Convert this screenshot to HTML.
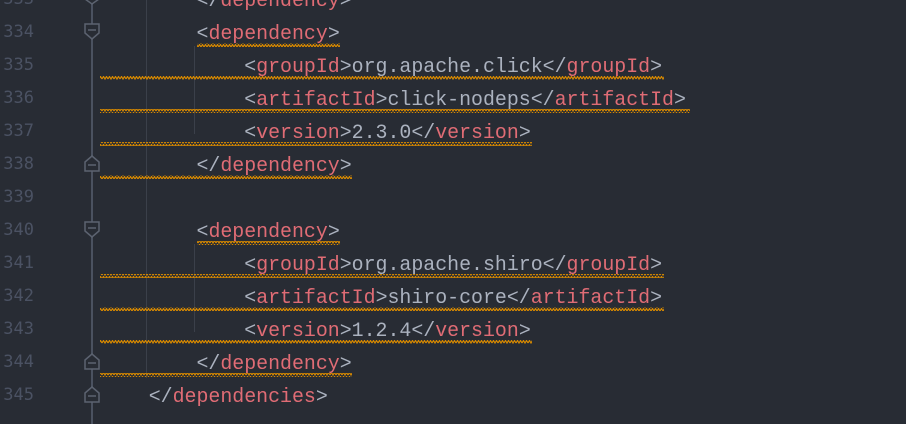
<!DOCTYPE html>
<html><head><style>
html,body{margin:0;padding:0;width:906px;height:424px;overflow:hidden;}
body{background:#282c34;position:relative;font-family:"DejaVu Sans Mono","Liberation Mono",monospace;}
.ln{position:absolute;left:0;width:34px;text-align:right;color:#4b5263;font-size:17px;line-height:33px;height:33px;font-family:"DejaVu Sans Mono","Liberation Mono",monospace;}
.c{position:absolute;left:101px;white-space:pre;font-size:19.9px;line-height:33px;height:33px;color:#abb2bf;font-family:"Liberation Mono",monospace;}
.t{color:#e06c75}
.vl{position:absolute;width:1px;background:#3b404a}
</style></head><body>
<div class="vl" style="left:91px;top:0;height:424px;background:#4b5260;width:2px"></div>
<div class="vl" style="left:146px;top:0;height:378px"></div>
<div class="vl" style="left:194px;top:46px;height:88px"></div>
<div class="vl" style="left:194px;top:244px;height:88px"></div>
<svg width="906" height="424" style="position:absolute;left:0;top:0">
<defs><pattern id="w" width="6" height="4" patternUnits="userSpaceOnUse"><path d="M0 3 L1.5 0.5 L3 3 L4.5 0.5 L6 3" stroke="#d98a00" stroke-width="1.2" fill="none"/></pattern></defs>
<g fill="url(#w)">
<rect x="197" y="43" width="143" height="4"/>
<rect x="100" y="76" width="564" height="4"/>
<rect x="100" y="109" width="590" height="4"/>
<rect x="100" y="142" width="432" height="4"/>
<rect x="100" y="175" width="252" height="4"/>
<rect x="197" y="241" width="143" height="4"/>
<rect x="100" y="274" width="564" height="4"/>
<rect x="100" y="307" width="564" height="4"/>
<rect x="100" y="340" width="432" height="4"/>
<rect x="100" y="373" width="252" height="4"/>
</g>
<g fill="#282c34" stroke="#5c6370" stroke-width="1.5">
<path d="M85 -8 V-1 L92 4 L99 -1 V-8 Z"/>
<path d="M85 24 H99 V33 L92 39 L85 33 Z"/><line x1="88" y1="30" x2="96" y2="30"/>
<path d="M85 171 V162 L92 156 L99 162 V171 Z"/><line x1="88" y1="165" x2="96" y2="165"/>
<path d="M85 222 H99 V231 L92 237 L85 231 Z"/><line x1="88" y1="228" x2="96" y2="228"/>
<path d="M85 369 V360 L92 354 L99 360 V369 Z"/><line x1="88" y1="363" x2="96" y2="363"/>
<path d="M85 402 V393 L92 387 L99 393 V402 Z"/><line x1="88" y1="396" x2="96" y2="396"/>
</g>
</svg>
<div class="ln" style="top:-17px">333</div>
<div class="ln" style="top:16px">334</div>
<div class="ln" style="top:49px">335</div>
<div class="ln" style="top:82px">336</div>
<div class="ln" style="top:115px">337</div>
<div class="ln" style="top:148px">338</div>
<div class="ln" style="top:181px">339</div>
<div class="ln" style="top:214px">340</div>
<div class="ln" style="top:247px">341</div>
<div class="ln" style="top:280px">342</div>
<div class="ln" style="top:313px">343</div>
<div class="ln" style="top:346px">344</div>
<div class="ln" style="top:379px">345</div>
<div class="c" style="top:-16px">        &lt;/<span class="t">dependency</span>&gt;</div>
<div class="c" style="top:17px">        &lt;<span class="t">dependency</span>&gt;</div>
<div class="c" style="top:50px">            &lt;<span class="t">groupId</span>&gt;org.apache.click&lt;/<span class="t">groupId</span>&gt;</div>
<div class="c" style="top:83px">            &lt;<span class="t">artifactId</span>&gt;click-nodeps&lt;/<span class="t">artifactId</span>&gt;</div>
<div class="c" style="top:116px">            &lt;<span class="t">version</span>&gt;2.3.0&lt;/<span class="t">version</span>&gt;</div>
<div class="c" style="top:149px">        &lt;/<span class="t">dependency</span>&gt;</div>
<div class="c" style="top:215px">        &lt;<span class="t">dependency</span>&gt;</div>
<div class="c" style="top:248px">            &lt;<span class="t">groupId</span>&gt;org.apache.shiro&lt;/<span class="t">groupId</span>&gt;</div>
<div class="c" style="top:281px">            &lt;<span class="t">artifactId</span>&gt;shiro-core&lt;/<span class="t">artifactId</span>&gt;</div>
<div class="c" style="top:314px">            &lt;<span class="t">version</span>&gt;1.2.4&lt;/<span class="t">version</span>&gt;</div>
<div class="c" style="top:347px">        &lt;/<span class="t">dependency</span>&gt;</div>
<div class="c" style="top:380px">    &lt;/<span class="t">dependencies</span>&gt;</div>
</body></html>
